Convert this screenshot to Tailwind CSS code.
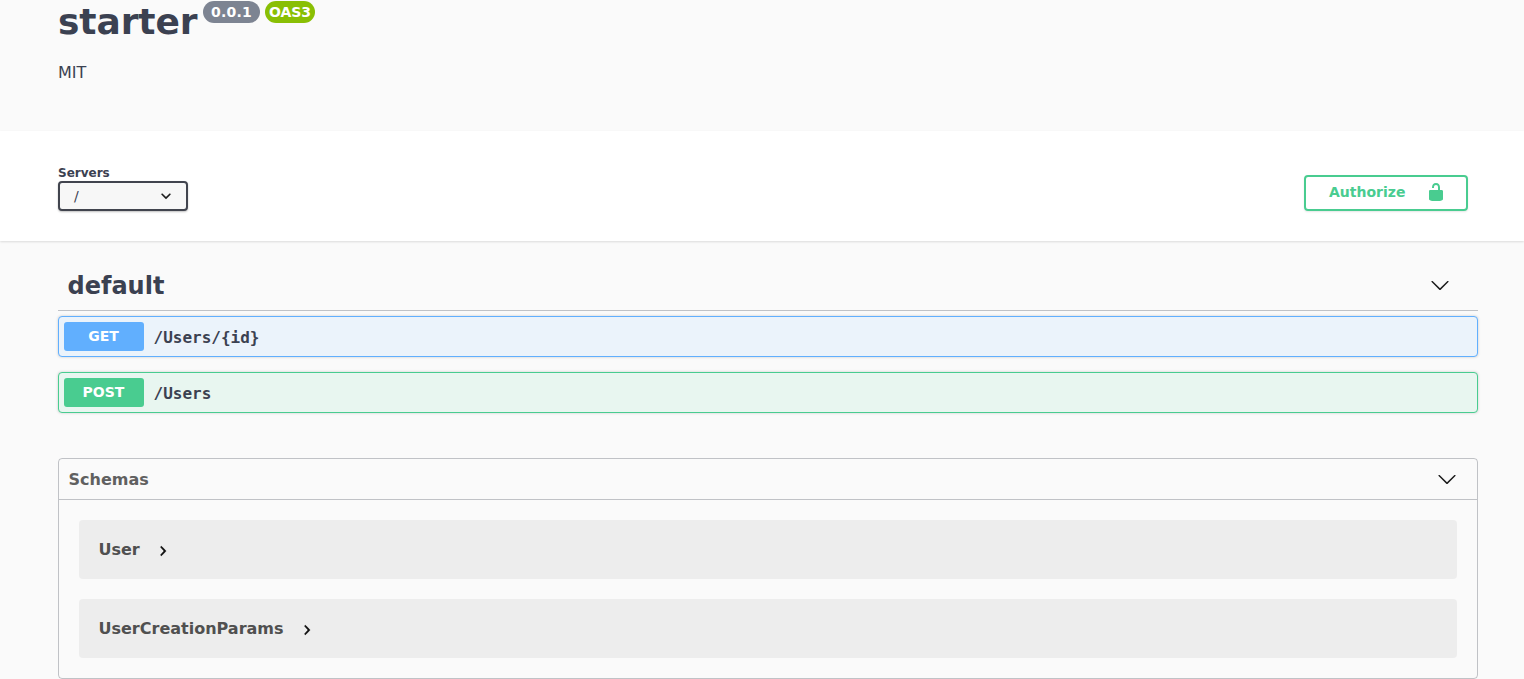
<!doctype html>
<html lang="en">
<head>
<meta charset="utf-8">
<title>starter</title>
<script src="https://cdn.jsdelivr.net/npm/@tailwindcss/browser@4"></script>
</head>
<body class="bg-[#fafafa] text-[#3b4151] font-['DejaVu_Sans',sans-serif] h-[679px] overflow-hidden">
  <section class="h-[131px] pl-[58px] pr-[46px]">
    <div class="flex items-start h-[44px]">
      <h1 class="text-[36px] font-bold leading-[44px] w-[140px] tracking-[-0.1px]">starter</h1>
      <span class="ml-[5px] mt-[1px] h-[22px] w-[57px] rounded-[11px] bg-[#7d8492] text-white text-[14px] font-bold leading-[22px] text-center tracking-[0.2px]">0.0.1</span>
      <span class="ml-[5px] mt-[1px] h-[22px] w-[50px] rounded-[11px] bg-[#89bf04] text-white text-[14px] font-bold leading-[22px] text-center">OAS3</span>
    </div>
    <p class="mt-[17px] text-[16px] leading-[24px]">MIT</p>
  </section>

  <section class="h-[110px] bg-white shadow-[0_1px_2px_0_rgba(0,0,0,0.12)] pl-[58px] pr-[46px] flex items-start justify-between relative">
    <div class="pt-[35px]">
      <div class="text-[12px] font-bold leading-[14px]">Servers</div>
      <div class="mt-[1px] w-[130px] h-[30px] rounded-[4px] border-2 border-[#41444e] bg-[#f7f7f7] shadow-[0_1px_2px_0_rgba(0,0,0,0.25)] flex items-center justify-between pl-[14px] pr-[14px]">
        <span class="text-[14px] font-normal">/</span>
        <svg class="w-[20px] h-[20px] -mr-[4px]" viewBox="0 0 20 20" fill="#1f1f1f"><path d="M13.418 7.859a.695.695 0 0 1 .978 0 .68.68 0 0 1 0 .969l-3.908 3.83a.697.697 0 0 1-.979 0l-3.908-3.83a.68.68 0 0 1 0-.969.695.695 0 0 1 .978 0L10 11l3.418-3.141z" stroke="#1f1f1f" stroke-width="0.2"/></svg>
      </div>
    </div>
    <button class="mt-[44px] mr-[10px] w-[164px] h-[36px] rounded-[4px] border-2 border-[#49cc90] bg-transparent shadow-[0_1px_2px_rgba(0,0,0,0.1)] flex items-center pl-[23px] pb-[2px] text-[#49cc90] text-[14px] font-bold">
      <span>Authorize</span>
      <svg class="ml-[21px] w-[20px] h-[20px]" viewBox="0 0 20 20" fill="#49cc90"><path d="M15.8 8H14V5.6C14 2.703 12.665 1 10 1 7.334 1 6 2.703 6 5.6V6h2v-.801C8 3.754 8.797 3 10 3c1.203 0 2 .754 2 2.199V8H4c-.553 0-1 .646-1 1.199V17c0 .549.428 1.139.951 1.307l1.197.387C5.672 18.861 6.55 19 7.1 19h5.8c.549 0 1.428-.139 1.951-.307l1.196-.387c.524-.167.953-.757.953-1.306V9.199C17 8.646 16.352 8 15.8 8z"/></svg>
    </button>
  </section>

  <main class="pl-[58px] pr-[46px]">
    <div class="mt-[20px] h-[50px] border-b border-[#3b4151]/30 flex items-center justify-between pl-[9.5px] pr-[28px]">
      <h2 class="text-[24px] font-bold leading-[48px]">default</h2>
      <svg class="w-[20px] h-[20px] -mt-[2px]" viewBox="0 0 20 20" fill="#1a1a1a"><path d="M17.418 6.109c.272-.268.709-.268.979 0s.271.701 0 .969l-7.908 7.83c-.27.268-.707.268-.979 0l-7.908-7.83c-.27-.268-.27-.701 0-.969.271-.268.709-.268.979 0L10 13.25l7.418-7.141z"/></svg>
    </div>

    <div class="mt-[5px] h-[41px] rounded-[4px] border border-[#61affe] bg-[#ebf3fb] shadow-[0_0_3px_rgba(0,0,0,0.19)] flex items-center pl-[5px]">
      <span class="w-[80px] h-[29px] rounded-[3px] bg-[#61affe] text-white text-[14px] font-bold leading-[29px] text-center -mt-[1px] -indent-[1px]">GET</span>
      <span class="ml-[10px] mt-[2px] font-['DejaVu_Sans_Mono',monospace] text-[16px] font-bold leading-[24px] -indent-[0.5px]">/Users/{id}</span>
    </div>
    <div class="mt-[15px] h-[41px] rounded-[4px] border border-[#49cc90] bg-[#e8f6f0] shadow-[0_0_3px_rgba(0,0,0,0.19)] flex items-center pl-[5px]">
      <span class="w-[80px] h-[29px] rounded-[3px] bg-[#49cc90] text-white text-[14px] font-bold leading-[29px] text-center -mt-[1px] -indent-[1px]">POST</span>
      <span class="ml-[10px] mt-[2px] font-['DejaVu_Sans_Mono',monospace] text-[16px] font-bold leading-[24px] -indent-[0.5px]">/Users</span>
    </div>

    <section class="mt-[45px] h-[221px] rounded-[4px] border border-[#3b4151]/30">
      <div class="h-[41px] border-b border-[#3b4151]/30 flex items-center justify-between pl-[10px] pr-[20px]">
        <h4 class="text-[16px] font-bold text-[#606060] mt-[1px] -indent-[0.5px]">Schemas</h4>
        <svg class="w-[20px] h-[20px]" viewBox="0 0 20 20" fill="#1a1a1a"><path d="M17.418 6.109c.272-.268.709-.268.979 0s.271.701 0 .969l-7.908 7.83c-.27.268-.707.268-.979 0l-7.908-7.83c-.27-.268-.27-.701 0-.969.271-.268.709-.268.979 0L10 13.25l7.418-7.141z"/></svg>
      </div>
      <div class="pt-[20px] px-[20px] flex flex-col gap-[20px]">
        <div class="h-[59px] rounded-[4px] bg-[#ededed] flex items-center pl-[20px]">
          <span class="text-[16px] font-bold text-[#505050] -indent-[0.5px]">User</span>
          <svg class="ml-[15px] w-[20px] h-[20px] mt-[2px]" viewBox="0 0 20 20" fill="#111"><path d="M6.859 6.582a.68.68 0 0 1 0-.969.695.695 0 0 1 .978 0l3.83 3.908a.697.697 0 0 1 0 .979l-3.83 3.908a.695.695 0 0 1-.978 0 .68.68 0 0 1 0-.969L10 10 6.859 6.582z" stroke="#111" stroke-width="0.5" transform="translate(-1 0)"/></svg>
        </div>
        <div class="h-[59px] rounded-[4px] bg-[#ededed] flex items-center pl-[20px]">
          <span class="text-[16px] font-bold text-[#505050] -indent-[0.5px]">UserCreationParams</span>
          <svg class="ml-[15px] w-[20px] h-[20px] mt-[2px]" viewBox="0 0 20 20" fill="#111"><path d="M6.859 6.582a.68.68 0 0 1 0-.969.695.695 0 0 1 .978 0l3.83 3.908a.697.697 0 0 1 0 .979l-3.83 3.908a.695.695 0 0 1-.978 0 .68.68 0 0 1 0-.969L10 10 6.859 6.582z" stroke="#111" stroke-width="0.5" transform="translate(-1 0)"/></svg>
        </div>
      </div>
    </section>
  </main>
</body>
</html>
